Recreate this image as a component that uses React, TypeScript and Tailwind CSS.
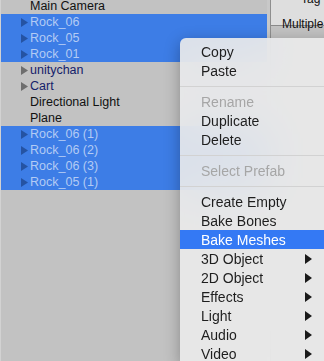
const rows: { name: string; arrow?: boolean; selected?: boolean; prefab?: boolean }[] = [
  { name: 'Main Camera' },
  { name: 'Rock_06', arrow: true, selected: true },
  { name: 'Rock_05', arrow: true, selected: true },
  { name: 'Rock_01', arrow: true, selected: true },
  { name: 'unitychan', arrow: true, prefab: true },
  { name: 'Cart', arrow: true, prefab: true },
  { name: 'Directional Light' },
  { name: 'Plane' },
  { name: 'Rock_06 (1)', arrow: true, selected: true },
  { name: 'Rock_06 (2)', arrow: true, selected: true },
  { name: 'Rock_06 (3)', arrow: true, selected: true },
  { name: 'Rock_05 (1)', arrow: true, selected: true },
]

type MenuEntry =
  | { sep: true }
  | { label: string; disabled?: boolean; active?: boolean; sub?: boolean }

const menu: MenuEntry[] = [
  { label: 'Copy' },
  { label: 'Paste' },
  { sep: true },
  { label: 'Rename', disabled: true },
  { label: 'Duplicate' },
  { label: 'Delete' },
  { sep: true },
  { label: 'Select Prefab', disabled: true },
  { sep: true },
  { label: 'Create Empty' },
  { label: 'Bake Bones' },
  { label: 'Bake Meshes', active: true },
  { label: '3D Object', sub: true },
  { label: '2D Object', sub: true },
  { label: 'Effects', sub: true },
  { label: 'Light', sub: true },
  { label: 'Audio', sub: true },
  { label: 'Video', sub: true },
]

function Caret({ className }: { className: string }) {
  return (
    <svg width="7" height="10" viewBox="0 0 7 10" className={className}>
      <path d="M0 0 L7 5 L0 10 Z" fill="currentColor" />
    </svg>
  )
}

export default function App() {
  return (
    <div className="relative flex h-[361px] w-[324px] overflow-hidden bg-[#c2c2c2] font-['Liberation_Sans',sans-serif]">
      {/* hierarchy */}
      <div className="w-[267px] border-l border-[#d2d2d2]">
        <div className="mt-[-2px] flex flex-col">
          {rows.map((r) => (
            <div
              key={r.name}
              className={`flex h-4 items-center text-[12.5px] leading-none ${
                r.selected ? 'bg-[#3d7de6]' : ''
              }`}
            >
              <div className="flex w-[29px] justify-end pr-[2px]">
                {r.arrow && (
                  <svg width="7" height="9" viewBox="0 0 7 9" className={r.selected ? 'text-[#2553a3]' : 'text-[#6e6e6e]'}>
                    <path d="M0 0 L7 4.5 L0 9 Z" fill="currentColor" />
                  </svg>
                )}
              </div>
              <span
                className={
                  r.selected ? 'text-[#b3cbf4]' : r.prefab ? 'text-[#15216a]' : 'text-[#111]'
                }
              >
                {r.name}
              </span>
            </div>
          ))}
        </div>
      </div>
      <div className="w-[3px] bg-[#c8c8c8]" />
      {/* inspector */}
      <div className="flex-1 border-l border-[#8e8e8e]">
        <div className="h-[33px] border-b border-[#8a8a8a] bg-[#dedede] pl-[11px] text-[12px] leading-none text-[#111]">
          <div className="mt-[-7px] pl-[19px]">Tag</div>
          <div className="mt-[13px]">Multiple</div>
        </div>
      </div>

      {/* context menu */}
      <div className="absolute left-[180px] top-[38px] w-[170px] rounded-tl-[6px] bg-[#ebebeb]/90 pt-[4px] text-[14px] leading-none text-[#1e1e1e] shadow-[0_4px_16px_rgba(0,0,0,0.3)] backdrop-blur-xl">
        {menu.map((m, i) =>
          'sep' in m ? (
            <div key={i} className="flex h-[12px] items-center">
              <div className="h-px w-full bg-[#d2d2d2]" />
            </div>
          ) : (
            <div
              key={i}
              className={`flex h-[19px] items-center pl-[21px] ${
                m.active ? 'bg-[#3479f4] text-white' : m.disabled ? 'text-[#a6a6a6]' : ''
              }`}
            >
              <span className="w-[104px]">{m.label}</span>
              {m.sub && <Caret className="text-[#1a1a1a]" />}
            </div>
          ),
        )}
      </div>
    </div>
  )
}
